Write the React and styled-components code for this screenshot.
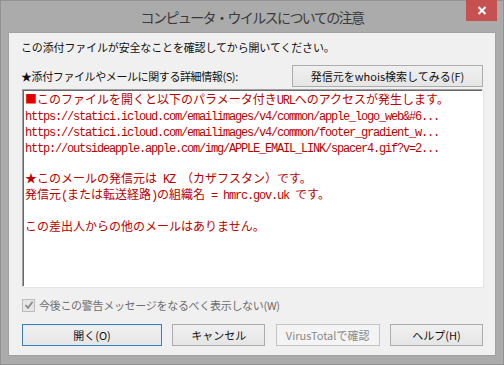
import React from "react";
import styled, { createGlobalStyle } from "styled-components";

const GlobalStyle = createGlobalStyle`
  body {
    margin: 0;
    background: #a9a9a9;
    font-family: "Noto Sans CJK JP", "Noto Sans", sans-serif;
  }
`;

const Window = styled.div`
  width: 504px;
  height: 365px;
  box-sizing: border-box;
  background: #ababab;
  border: 1px solid #929292;
  display: flex;
  flex-direction: column;
`;

const TitleBar = styled.div`
  height: 30px;
  position: relative;
  display: flex;
  align-items: center;
  justify-content: center;
  font-size: 14px;
  letter-spacing: -1.6px;
  color: #3a3a3a;
  padding-top: 1px;
`;

const CloseButton = styled.div`
  position: absolute;
  top: -1px;
  right: 6px;
  width: 31px;
  height: 21px;
  background: #c75050;
  display: flex;
  align-items: center;
  justify-content: center;
`;

const Client = styled.div`
  flex: 1;
  margin: 0 7px 8px 7px;
  background: #f0f0f0;
  border: 1px solid #a2a2a2;
  padding: 7px 12px 0 12px;
  display: flex;
  flex-direction: column;
  font-size: 11px;
  color: #111;
`;

const Intro = styled.div`
  line-height: 14px;
  letter-spacing: -0.15px;
`;

const DetailsRow = styled.div`
  display: flex;
  align-items: center;
  justify-content: space-between;
  margin-top: 11px;
`;

const Label = styled.span`
  letter-spacing: -0.4px;
`;

const Button = styled.button`
  font-family: "Noto Sans CJK JP", "Noto Sans", sans-serif;
  font-size: 11px;
  width: ${(p) => p.$w}px;
  height: 22px;
  padding: 0;
  border: 1px solid ${(p) => (p.$default ? "#3c7fb1" : p.disabled ? "#c4c4c4" : "#acacac")};
  background: ${(p) =>
    p.disabled ? "#f4f4f4" : "linear-gradient(#f0f0f0, #e5e5e5)"};
  color: ${(p) => (p.disabled ? "#8a8a8a" : "#111")};
  box-shadow: ${(p) => (p.$default ? "inset 0 0 0 1px #dcecfc" : "none")};
`;

const DetailsBox = styled.div`
  margin-top: 2px;
  margin-left: 1px;
  height: 198px;
  box-sizing: border-box;
  background: #fff;
  border: 1px solid;
  border-color: #a0a0a0 #ffffff #ffffff #a0a0a0;
  box-shadow: inset 1px 1px 0 #696969, 1px 1px 0 #e3e3e3;
  padding: 1px 2px 0 2px;
  color: #bb0000;
  font-size: 12px;
  line-height: 15.9px;
  white-space: pre;
  overflow: hidden;
`;

const Line = styled.div`
  height: 15.9px;
`;

const Mono = styled.span`
  display: inline-block;
  line-height: 11px;
  font-family: "Liberation Mono", monospace;
  font-size: 12px;
  letter-spacing: -1.2px;
`;

const Square = styled.span`
  color: #e00000;
`;

const CheckRow = styled.label`
  display: flex;
  align-items: center;
  gap: 4px;
  margin-top: 10px;
  margin-left: 1px;
  color: #6d6d6d;
  font-size: 11px;
  letter-spacing: -0.3px;
`;

const CheckBox = styled.span`
  width: 11px;
  height: 11px;
  border: 1px solid #bcbcbc;
  background: #e6e6e6;
  display: flex;
  align-items: center;
  justify-content: center;
`;

const ButtonRow = styled.div`
  display: flex;
  justify-content: space-between;
  margin-top: 11px;
  margin-left: 1px;
`;

const Check = () => (
  <svg width="10" height="10" viewBox="0 0 10 10">
    <path d="M1.5 5.2 L4 7.8 L8.6 1.8" stroke="#8a8a8a" strokeWidth="1.8" fill="none" />
  </svg>
);

const CloseIcon = () => (
  <svg width="10" height="9" viewBox="0 0 10 9">
    <path d="M1.5 1 L8.5 8 M8.5 1 L1.5 8" stroke="#fff" strokeWidth="2" />
  </svg>
);

export default function App() {
  return (
    <>
      <GlobalStyle />
      <Window>
        <TitleBar>
          コンピュータ・ウイルスについての注意
          <CloseButton>
            <CloseIcon />
          </CloseButton>
        </TitleBar>
        <Client>
          <Intro>この添付ファイルが安全なことを確認してから開いてください。</Intro>
          <DetailsRow>
            <Label>★添付ファイルやメールに関する詳細情報(S):</Label>
            <Button $w={191}>発信元をwhois検索してみる(F)</Button>
          </DetailsRow>
          <DetailsBox>
            <Line>
              <Square>■</Square>このファイルを開くと以下のパラメータ付き<Mono>URL</Mono>へのアクセスが発生します。
            </Line>
            <Line>
              <Mono>https://statici.icloud.com/emailimages/v4/common/apple_logo_web&amp;#6...</Mono>
            </Line>
            <Line>
              <Mono>https://statici.icloud.com/emailimages/v4/common/footer_gradient_w...</Mono>
            </Line>
            <Line>
              <Mono>http://outsideapple.apple.com/img/APPLE_EMAIL_LINK/spacer4.gif?v=2...</Mono>
            </Line>
            <Line />
            <Line>
              ★このメールの発信元は<Mono> KZ </Mono>（カザフスタン）です。
            </Line>
            <Line>
              発信元<Mono>(</Mono>または転送経路<Mono>)</Mono>の組織名<Mono> = hmrc.gov.uk </Mono>です。
            </Line>
            <Line />
            <Line>この差出人からの他のメールはありません。</Line>
          </DetailsBox>
          <CheckRow>
            <CheckBox>
              <Check />
            </CheckBox>
            今後この警告メッセージをなるべく表示しない(W)
          </CheckRow>
          <ButtonRow>
            <Button $w={140} $default>開く(O)</Button>
            <Button $w={93}>キャンセル</Button>
            <Button $w={104} disabled>VirusTotalで確認</Button>
            <Button $w={93}>ヘルプ(H)</Button>
          </ButtonRow>
        </Client>
      </Window>
    </>
  );
}
